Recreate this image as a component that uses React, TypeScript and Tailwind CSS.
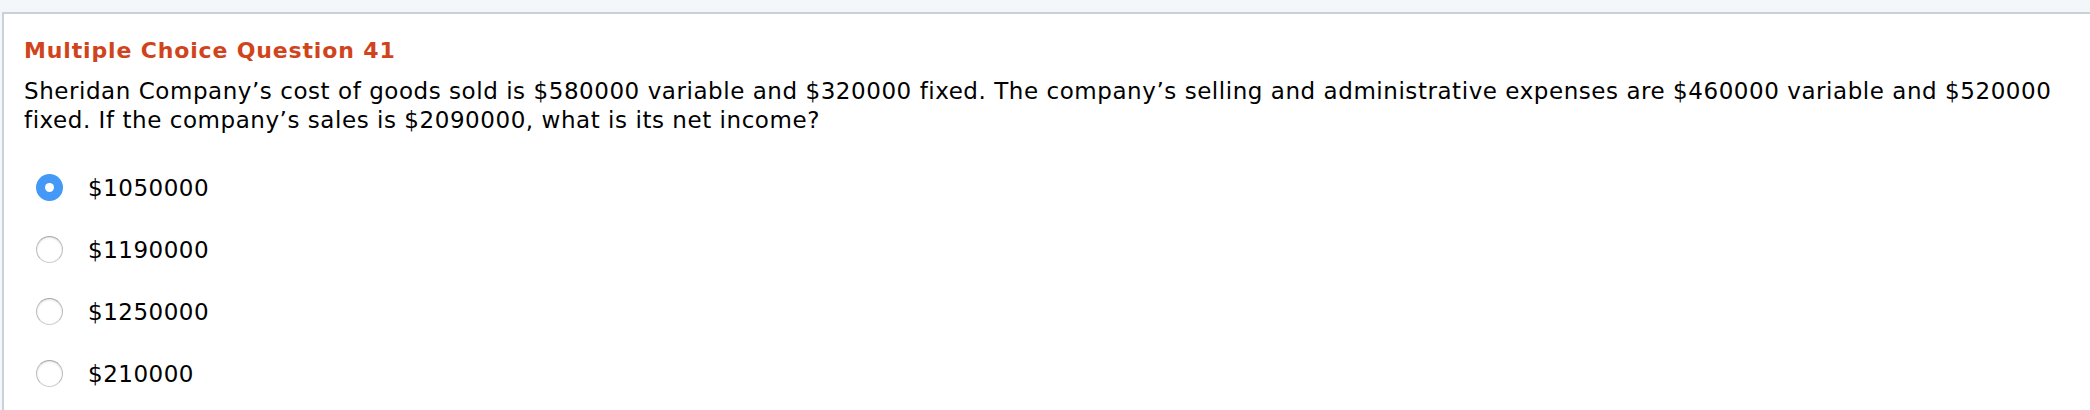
import React, { useState } from 'react';

const options = ['$1050000', '$1190000', '$1250000', '$210000'];

function Radio({ checked }: { checked: boolean }) {
    if (checked) {
        return (
            <span className="w-[27px] h-[27px] rounded-full bg-[#4499f7] flex items-center justify-center shrink-0">
                <span className="w-[9px] h-[9px] rounded-full bg-white" />
            </span>
        );
    }
    return (
        <span className="w-[27px] h-[27px] rounded-full bg-white border border-t-[#a9a9a9] border-x-[#bcbcbc] border-b-[#cfcfcf] shadow-[inset_0_1px_2px_rgba(0,0,0,0.12)] shrink-0" />
    );
}

export default function App() {
    const [selected, setSelected] = useState(0);

    return (
        <div className="w-[2090px] h-[410px] bg-[#f4f7fa] pt-[12px] pl-[2px] overflow-hidden font-['DejaVu_Sans','Verdana',sans-serif] [font-variant-ligatures:none]">
            <div className="bg-white h-full border-t-2 border-l-2 border-[#c9d1dd] pl-[20px] pt-[23px]">
                {/* Title */}
                <h2 className="text-[22px] leading-[28px] font-bold tracking-[0.85px] text-[#d0441d]">
                    Multiple Choice Question 41
                </h2>

                {/* Question */}
                <p className="mt-[12px] text-[23px] leading-[29px] tracking-[0.55px] text-black">
                    Sheridan Company’s cost of goods sold is $580000 variable and $320000 fixed. The company’s selling and administrative expenses are $460000 variable and $520000 fixed. If the company’s sales is $2090000, what is its net income?
                </p>

                {/* Options */}
                <div className="mt-[38px] ml-[12px] flex flex-col gap-[34px]">
                    {options.map((opt, i) => (
                        <label
                            key={opt}
                            onClick={() => setSelected(i)}
                            className="h-[28px] flex items-center gap-[25px] cursor-pointer"
                        >
                            <Radio checked={selected === i} />
                            <span className="text-[23px] leading-[28px] pt-[2px] tracking-[0.5px] text-black">{opt}</span>
                        </label>
                    ))}
                </div>
            </div>
        </div>
    );
}
